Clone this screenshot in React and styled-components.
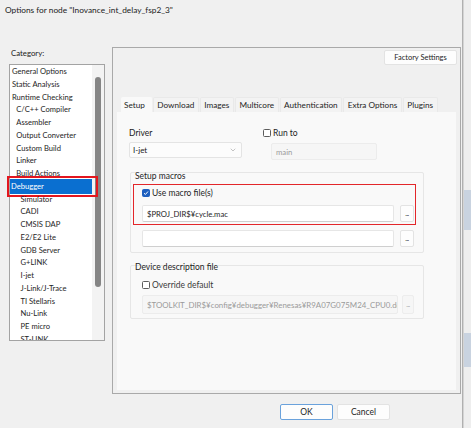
import React from "react";
import styled, { createGlobalStyle } from "styled-components";
import { ChevronDown } from "lucide-react";

const GlobalStyle = createGlobalStyle`
  html, body {
    margin: 0;
    padding: 0;
  }
  body {
    background: #f0f0f0;
    font-family: Lato, "Liberation Sans", sans-serif;
    font-size: 8.5px;
    color: #1b1b1b;
  }
  * {
    box-sizing: border-box;
  }
`;

const categories = [
  { label: "General Options", level: 0 },
  { label: "Static Analysis", level: 0 },
  { label: "Runtime Checking", level: 0 },
  { label: "C/C++ Compiler", level: 1 },
  { label: "Assembler", level: 1 },
  { label: "Output Converter", level: 1 },
  { label: "Custom Build", level: 1 },
  { label: "Linker", level: 1 },
  { label: "Build Actions", level: 1 },
  { label: "Debugger", level: 0, selected: true },
  { label: "Simulator", level: 2 },
  { label: "CADI", level: 2 },
  { label: "CMSIS DAP", level: 2 },
  { label: "E2/E2 Lite", level: 2 },
  { label: "GDB Server", level: 2 },
  { label: "G+LINK", level: 2 },
  { label: "I-jet", level: 2 },
  { label: "J-Link/J-Trace", level: 2 },
  { label: "TI Stellaris", level: 2 },
  { label: "Nu-Link", level: 2 },
  { label: "PE micro", level: 2 },
  { label: "ST-LINK", level: 2 },
];

const tabs = ["Setup", "Download", "Images", "Multicore", "Authentication", "Extra Options", "Plugins"];

const Screen = styled.div`
  width: 471px;
  height: 428px;
  display: flex;
  overflow: hidden;
`;

const Dialog = styled.div`
  width: 463px;
  height: 100%;
  display: flex;
  flex-direction: column;
  background: #f0f0f0;
  border-right: 1px solid #b0b0b0;
`;

const BackWindow = styled.div`
  flex: 1;
  border-left: 1px solid #d4d4d4;
  background: linear-gradient(
    to bottom,
    #eeeeee 0,
    #eeeeee 190px,
    #c9d3e0 190px,
    #c9d3e0 230px,
    #eeeeee 230px,
    #eeeeee 333px,
    #c9d3e0 333px,
    #c9d3e0 367px,
    #eeeeee 367px
  );
`;

const TitleBar = styled.div`
  height: 20px;
  padding-left: 5px;
  display: flex;
  align-items: center;
  font-size: 8.3px;
  color: #222;
`;

const Body = styled.div`
  flex: 1;
  display: flex;
  flex-direction: column;
  padding: 27px 0 0 9px;
`;

const Main = styled.div`
  display: flex;
  gap: 7px;
`;

const CategoryColumn = styled.div`
  width: 96px;
  display: flex;
  flex-direction: column;
`;

const CategoryLabel = styled.div`
  height: 17px;
  padding: 1px 0 0 2px;
  line-height: 10px;
  font-size: 7.8px;
`;

const ListBox = styled.div`
  height: 277px;
  display: flex;
  border: 1px solid #a3a3a3;
  background: #fff;
  font-size: 7.6px;
`;

const Items = styled.div`
  width: 82px;
  clip-path: inset(0 -20px 0 -20px);
`;

const Item = styled.div`
  position: relative;
  line-height: 12.75px;
  padding-left: ${(p) => 2 + p.$level * 4.25}px;
  white-space: nowrap;
  color: #1e1e1e;

  ${(p) =>
    p.$selected &&
    `
    margin: -1px 0;
    padding-top: 1px;
    padding-bottom: 1px;
    padding-left: 1px;
    background: #0a6fd0;
    color: #fff;
  `}
`;

const Marker = styled.span`
  position: absolute;
  inset: -3px -6px -3px -3px;
  border: 2px solid #e3161e;
  pointer-events: none;
`;

const ScrollTrack = styled.div`
  flex: 1;
  background: #f3f3f3;
  padding: 12px 0 0 3px;
`;

const ScrollThumb = styled.div`
  width: 6px;
  height: 210px;
  border-radius: 3px;
  background: #858585;
`;

const OptionsFrame = styled.div`
  width: 349px;
  height: 347px;
  border: 1px solid #a9a9a9;
  display: flex;
  flex-direction: column;
  padding: 2px 3px 3px 4px;
`;

const FactoryRow = styled.div`
  display: flex;
  justify-content: flex-end;
`;

const Button = styled.div`
  width: ${(p) => p.$width}px;
  height: ${(p) => p.$height || 15}px;
  display: flex;
  align-items: center;
  justify-content: center;
  background: #fdfdfd;
  border: 1px solid ${(p) => (p.$primary ? "#6aa2dc" : "#e3e3e3")};
  border-radius: 2px;
  font-size: ${(p) => p.$size || 8.5}px;
  color: #1e1e1e;
`;

const TabStrip = styled.div`
  margin-top: 32px;
  height: 15px;
  display: flex;
  padding-left: 4px;
  font-size: 8.2px;
`;

const Tab = styled.div`
  height: 100%;
  display: flex;
  align-items: center;
  white-space: nowrap;
  padding: ${(p) => (p.$active ? "0 6px 0 2px" : "0 3.5px")};
  margin-right: 1px;
  background: ${(p) => (p.$active ? "#f9f9f9" : "#f3f3f3")};
  border: 1px solid ${(p) => (p.$active ? "#f9f9f9" : "#e9e9e9")};
  border-bottom: none;
  border-radius: 2px 2px 0 0;
  color: #1e1e1e;
`;

const Panel = styled.div`
  flex: 1;
  margin-right: 1px;
  background: #f9f9f9;
  padding: 16px 0 0 12px;
  display: flex;
  flex-direction: column;
`;

const TopRow = styled.div`
  display: flex;
  gap: 21px;
`;

const Field = styled.div`
  display: flex;
  flex-direction: column;
`;

const FieldLabel = styled.div`
  line-height: 10px;
  margin-bottom: 4px;
`;

const Combo = styled.div`
  width: 113px;
  height: 16px;
  display: flex;
  align-items: center;
  justify-content: space-between;
  padding: 0 4px 0 3px;
  background: #fcfcfc;
  border: 1px solid #e4e4e4;
  border-radius: 2px;
  font-size: 8px;
`;

const CheckRow = styled.label`
  display: flex;
  align-items: center;
  gap: 1px;
  height: 10px;
  margin-top: ${(p) => p.$top || 0}px;
  color: ${(p) => (p.$muted ? "#3a3a3a" : "#1e1e1e")};
`;

const Box = styled.span`
  width: 8px;
  height: 8px;
  margin-right: 1px;
  display: flex;
  align-items: center;
  justify-content: center;
  border: 1px solid ${(p) => (p.$checked ? "#1d5fbf" : "#5c5c5c")};
  border-radius: 1.5px;
  background: ${(p) => (p.$checked ? "#1d5fbf" : "#fff")};
`;

const TextInput = styled.div`
  width: ${(p) => (p.$width ? `${p.$width}px` : "auto")};
  flex: ${(p) => (p.$width ? "none" : 1)};
  min-width: 0;
  height: ${(p) => p.$height || 17}px;
  margin-left: ${(p) => p.$left || 0}px;
  margin-top: ${(p) => p.$top || 0}px;
  display: flex;
  align-items: center;
  padding-left: 4px;
  overflow: hidden;
  white-space: nowrap;
  font-size: ${(p) => p.$size || 7.7}px;
  background: ${(p) => (p.$disabled ? "#f6f6f6" : "#fff")};
  border: 1px solid ${(p) => (p.$disabled ? "#ececec" : "#e6e6e6")};
  border-bottom-color: ${(p) => (p.$disabled ? "#ececec" : "#cfcfcf")};
  border-radius: 2px;
  color: ${(p) => (p.$disabled ? "#9a9a9a" : "#1e1e1e")};
`;

const GroupBox = styled.div`
  width: 294px;
  margin: ${(p) => p.$top}px 0 0 1px;
  border: 1px solid #e6e6e6;
  border-radius: 2px;
  padding: 0 9px ${(p) => p.$bottom}px 11px;
`;

const GroupTitle = styled.div`
  line-height: 10px;
  margin: ${(p) => p.$top}px 0 0 -7px;
  color: #1e1e1e;
`;

const RedFrame = styled.div`
  margin: 3px -2px 0 -9px;
  border: 1px solid #e3262a;
  padding: 3px 1px 2px 8px;
`;

const FileRow = styled.div`
  display: flex;
  gap: ${(p) => p.$gap || 6}px;
  margin-top: ${(p) => p.$top || 0}px;
`;

const Browse = styled.div`
  flex: none;
  width: ${(p) => p.$width || 14}px;
  height: ${(p) => p.$height || 17}px;
  display: flex;
  align-items: center;
  justify-content: center;
  background: ${(p) => (p.$disabled ? "#f6f6f6" : "#fdfdfd")};
  border: 1px solid ${(p) => (p.$disabled ? "#ededed" : "#e3e3e3")};
  border-radius: 2px;
  color: ${(p) => (p.$disabled ? "#a8a8a8" : "#333")};
  font-size: 7px;
  letter-spacing: -0.5px;
  padding-bottom: 2px;
`;

const ButtonRow = styled.div`
  display: flex;
  justify-content: flex-end;
  gap: 4px;
  margin-top: 10px;
  padding-right: 72px;
`;

const CheckMark = () => (
  <svg width="6" height="6" viewBox="0 0 6 6">
    <path d="M1 3.2 L2.4 4.5 L5 1.5" fill="none" stroke="#fff" strokeWidth="1" />
  </svg>
);

const Checkbox = ({ checked, label, top, muted }) => (
  <CheckRow $top={top} $muted={muted}>
    <Box $checked={checked}>{checked && <CheckMark />}</Box>
    {label}
  </CheckRow>
);

export default function App() {
  return (
    <>
      <GlobalStyle />
      <Screen>
        <Dialog>
          <TitleBar>Options for node "Inovance_int_delay_fsp2_3"</TitleBar>
          <Body>
            <Main>
              <CategoryColumn>
                <CategoryLabel>Category:</CategoryLabel>
                <ListBox>
                  <Items>
                    {categories.map((c) => (
                      <Item key={c.label} $level={c.level} $selected={c.selected}>
                        {c.label}
                        {c.selected && <Marker />}
                      </Item>
                    ))}
                  </Items>
                  <ScrollTrack>
                    <ScrollThumb />
                  </ScrollTrack>
                </ListBox>
              </CategoryColumn>

              <OptionsFrame>
                <FactoryRow>
                  <Button $width={73} $size={7.5}>
                    Factory Settings
                  </Button>
                </FactoryRow>
                <TabStrip>
                  {tabs.map((t, i) => (
                    <Tab key={t} $active={i === 0}>
                      {t}
                    </Tab>
                  ))}
                </TabStrip>
                <Panel>
                  <TopRow>
                    <Field>
                      <FieldLabel>Driver</FieldLabel>
                      <Combo>
                        I-jet
                        <ChevronDown size={8} color="#8a8a8a" strokeWidth={1.5} />
                      </Combo>
                    </Field>
                    <Field>
                      <Checkbox label="Run to" />
                      <TextInput $disabled $width={106} $left={8} $top={5}>
                        main
                      </TextInput>
                    </Field>
                  </TopRow>

                  <GroupBox $top={12} $bottom={5}>
                    <GroupTitle $top={-2}>Setup macros</GroupTitle>
                    <RedFrame>
                      <Checkbox checked label="Use macro file(s)" />
                      <FileRow $top={7}>
                        <TextInput>$PROJ_DIR$¥cycle.mac</TextInput>
                        <Browse>...</Browse>
                      </FileRow>
                    </RedFrame>
                    <FileRow $top={5}>
                      <TextInput />
                      <Browse>...</Browse>
                    </FileRow>
                  </GroupBox>

                  <GroupBox $top={12} $bottom={4}>
                    <GroupTitle $top={-4}>Device description file</GroupTitle>
                    <Checkbox label="Override default" top={8} muted />
                    <FileRow $top={5} $gap={4}>
                      <TextInput $disabled $height={19} $size={7.9}>
                        $TOOLKIT_DIR$¥config¥debugger¥Renesas¥R9A07G075M24_CPU0.ddf
                      </TextInput>
                      <Browse $disabled $width={12} $height={19}>
                        ...
                      </Browse>
                    </FileRow>
                  </GroupBox>
                </Panel>
              </OptionsFrame>
            </Main>

            <ButtonRow>
              <Button $width={53} $height={16} $primary>
                OK
              </Button>
              <Button $width={53} $height={16}>
                Cancel
              </Button>
            </ButtonRow>
          </Body>
        </Dialog>
        <BackWindow />
      </Screen>
    </>
  );
}
